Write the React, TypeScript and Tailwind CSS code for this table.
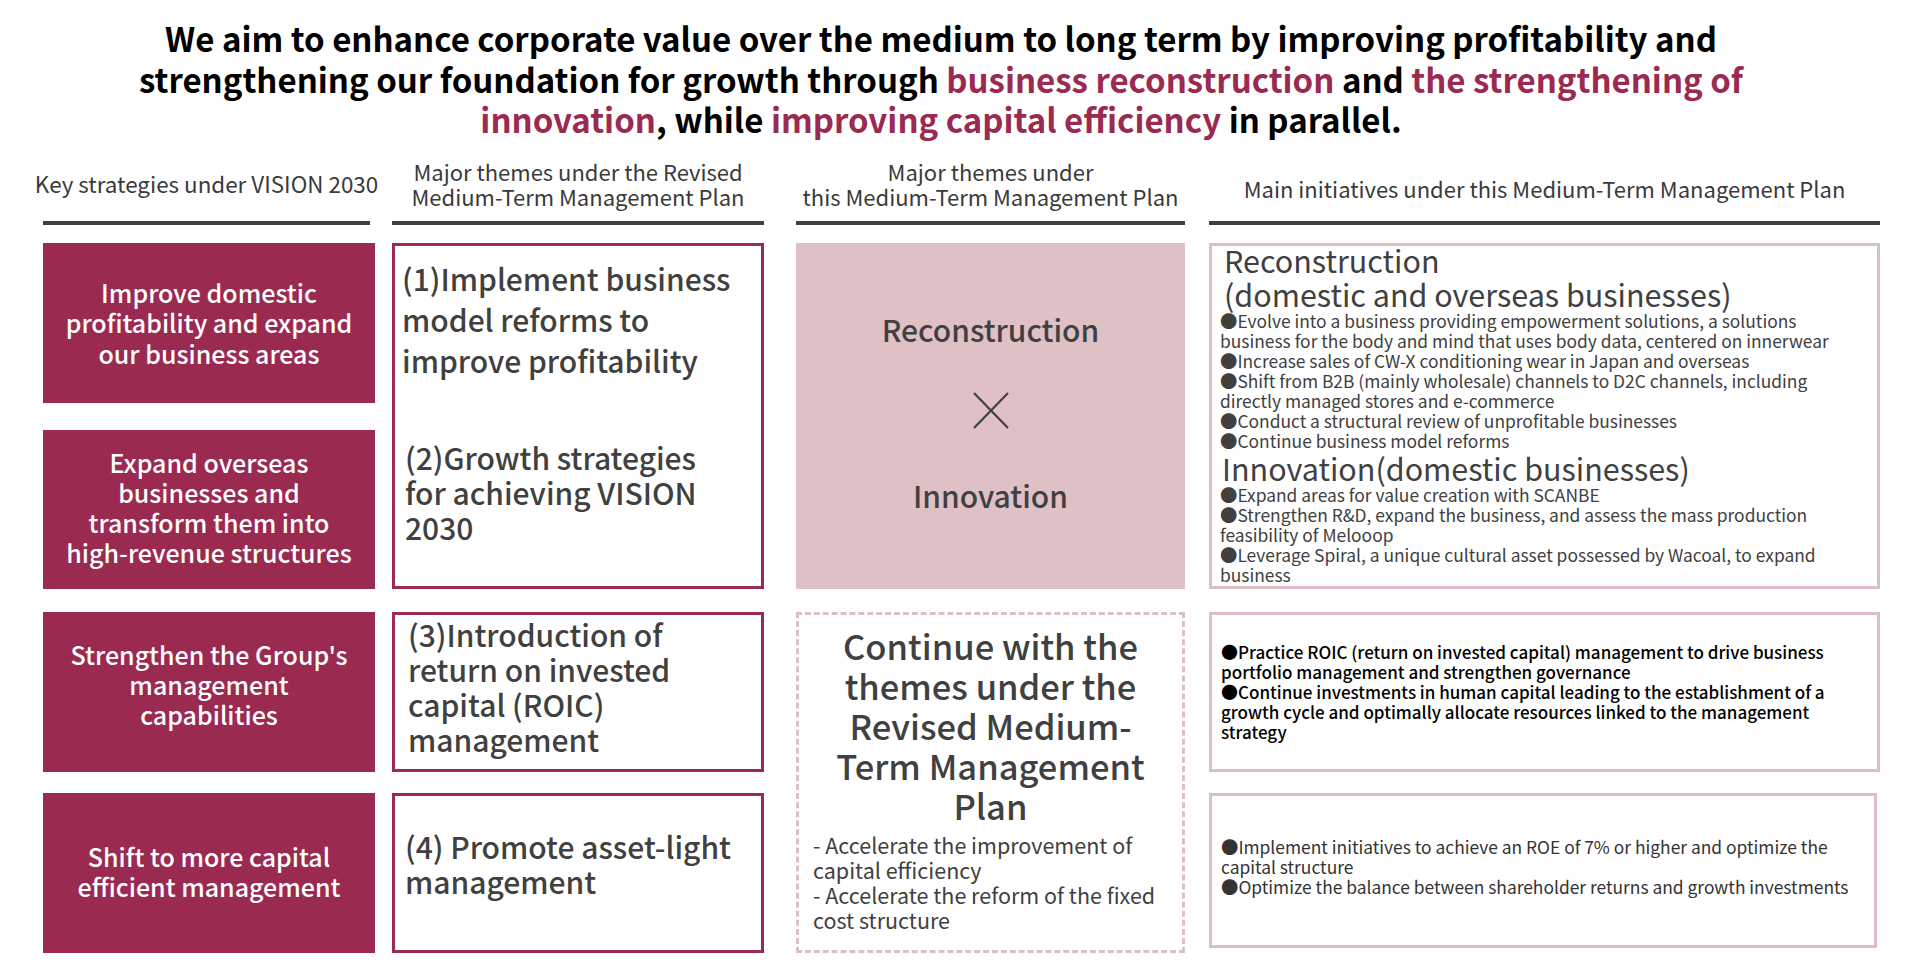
import React from "react";

const crimson = "text-[#9b2a51]";

function XMark() {
  return (
    <svg width="36" height="37" viewBox="0 0 36 37" className="block">
      <line x1="1" y1="1" x2="35" y2="36" stroke="#404040" strokeWidth="2.2" />
      <line x1="35" y1="1" x2="1" y2="36" stroke="#404040" strokeWidth="2.2" />
    </svg>
  );
}

export default function App() {
  return (
    <div className="w-[1920px] h-[980px] bg-white overflow-hidden font-['Noto_Sans_CJK_JP','Noto_Sans',sans-serif] text-[#404040]">
      <div className="pt-[18px] pr-[38px] text-center text-[33px] leading-[40.5px] font-bold text-black">
        We aim to enhance corporate value over the medium to long term by improving profitability and
        <br />
        strengthening our foundation for growth through{" "}
        <span className={crimson}>business reconstruction</span> and{" "}
        <span className={crimson}>the strengthening of</span>
        <br />
        <span className={crimson}>innovation</span>, while{" "}
        <span className={crimson}>improving capital efficiency</span> in parallel.
      </div>

      <div className="mt-[7px] ml-[43px] grid grid-cols-[332px_17px_372px_32px_389px_24px_671px] grid-rows-[78px_18px_160px_27px_159px_23px_160px_21px_160px]">
        {/* Headers */}
        <div className="col-start-1 row-start-1 mr-[5px] flex items-center justify-center border-b-4 border-[#3f3f3f] text-center text-[22.4px] leading-[25px] text-[#3a3a3a] whitespace-nowrap">
          Key strategies under VISION 2030
        </div>
        <div className="col-start-3 row-start-1 flex items-center justify-center border-b-4 border-[#3f3f3f] text-center text-[22px] leading-[25px] text-[#3a3a3a]">
          <span>
            Major themes under the Revised
            <br />
            Medium-Term Management Plan
          </span>
        </div>
        <div className="col-start-5 row-start-1 flex items-center justify-center border-b-4 border-[#3f3f3f] text-center text-[22px] leading-[25px] text-[#3a3a3a] whitespace-nowrap">
          <span>
            Major themes under
            <br />
            this Medium-Term Management Plan
          </span>
        </div>
        <div className="col-start-7 row-start-1 flex items-center justify-center pt-[10px] border-b-4 border-[#3f3f3f] text-center text-[22px] leading-[25px] text-[#3a3a3a]">
          Main initiatives under this Medium-Term Management Plan
        </div>

        {/* Column 1 */}
        <div className="col-start-1 row-start-3 flex items-center justify-center bg-[#9b2a51] text-center text-white text-[25px] leading-[30.5px] font-medium">
          <span>
            Improve domestic
            <br />
            profitability and expand
            <br />
            our business areas
          </span>
        </div>
        <div className="col-start-1 row-start-5 flex items-center justify-center pb-[4px] bg-[#9b2a51] text-center text-white text-[25px] leading-[30px] font-medium">
          <span>
            Expand overseas
            <br />
            businesses and
            <br />
            transform them into
            <br />
            high-revenue structures
          </span>
        </div>
        <div className="col-start-1 row-start-7 flex items-center justify-center pb-[16px] bg-[#9b2a51] text-center text-white text-[25px] leading-[30px] font-medium">
          <span>
            Strengthen the Group's
            <br />
            management
            <br />
            capabilities
          </span>
        </div>
        <div className="col-start-1 row-start-9 flex items-center justify-center pb-[4px] bg-[#9b2a51] text-center text-white text-[25px] leading-[30px] font-medium">
          <span>
            Shift to more capital
            <br />
            efficient management
          </span>
        </div>

        {/* Column 2 */}
        <div className="col-start-3 row-start-3 row-span-3 border-[3px] border-[#9b2a51] pt-[12px] pl-[7px] text-[30px] font-medium text-[#404040]">
          <div className="leading-[41px]">
            (1)Implement business
            <br />
            model reforms to
            <br />
            improve profitability
          </div>
          <div className="mt-[59px] pl-[3px] leading-[35px]">
            (2)Growth strategies
            <br />
            for achieving VISION
            <br />
            2030
          </div>
        </div>
        <div className="col-start-3 row-start-7 flex items-center border-[3px] border-[#9b2a51] pl-[13px] pb-[10px] text-[30px] leading-[35px] font-medium text-[#404040]">
          <span>
            (3)Introduction of
            <br />
            return on invested
            <br />
            capital (ROIC)
            <br />
            management
          </span>
        </div>
        <div className="col-start-3 row-start-9 flex items-center border-[3px] border-[#9b2a51] pl-[10px] pb-[18px] text-[30px] leading-[35px] font-medium text-[#404040]">
          <span>
            (4) Promote asset-light
            <br />
            management
          </span>
        </div>

        {/* Column 3 */}
        <div className="col-start-5 row-start-3 row-span-3 flex flex-col items-center justify-center pb-[8px] bg-[#dfc1c5] text-[30px] leading-[36px] font-medium text-[#404040]">
          <div>Reconstruction</div>
          <div className="mt-[45px] mb-[48px]">
            <XMark />
          </div>
          <div>Innovation</div>
        </div>
        <div className="col-start-5 row-start-7 row-span-3 border-[3px] border-dashed border-[#dcc0c4] pt-[10px] px-[14px] text-[#404040]">
          <div className="text-center text-[34.5px] leading-[40px] font-medium whitespace-nowrap">
            Continue with the
            <br />
            themes under the
            <br />
            Revised Medium-
            <br />
            Term Management
            <br />
            Plan
          </div>
          <div className="mt-[7px] text-[21.5px] leading-[25px] whitespace-nowrap">
            - Accelerate the improvement of
            <br />
            capital efficiency
            <br />
            - Accelerate the reform of the fixed
            <br />
            cost structure
          </div>
        </div>

        {/* Column 4 */}
        <div className="col-start-7 row-start-3 row-span-3 border-[3px] border-[#dcbfc3] pl-[8px] text-[#404040] whitespace-nowrap">
          <div className="-mt-[3px] pl-[4px] text-[30.5px] leading-[34px]">
            Reconstruction
            <br />
            (domestic and overseas businesses)
          </div>
          <div className="text-[17.4px] leading-[20px]">
            ●Evolve into a business providing empowerment solutions, a solutions
            <br />
            business for the body and mind that uses body data, centered on innerwear
            <br />
            ●Increase sales of CW-X conditioning wear in Japan and overseas
            <br />
            ●Shift from B2B (mainly wholesale) channels to D2C channels, including
            <br />
            directly managed stores and e-commerce
            <br />
            ●Conduct a structural review of unprofitable businesses
            <br />
            ●Continue business model reforms
          </div>
          <div className="pl-[2px] text-[30.5px] leading-[34px]">Innovation(domestic businesses)</div>
          <div className="text-[17.4px] leading-[20px]">
            ●Expand areas for value creation with SCANBE
            <br />
            ●Strengthen R&amp;D, expand the business, and assess the mass production
            <br />
            feasibility of Melooop
            <br />
            ●Leverage Spiral, a unique cultural asset possessed by Wacoal, to expand
            <br />
            business
          </div>
        </div>
        <div className="col-start-7 row-start-7 flex items-center border-[3px] border-[#dcbfc3] pl-[9px] text-[17px] leading-[20px] font-medium text-black whitespace-nowrap">
          <span>
            ●Practice ROIC (return on invested capital) management to drive business
            <br />
            portfolio management and strengthen governance
            <br />
            ●Continue investments in human capital leading to the establishment of a
            <br />
            growth cycle and optimally allocate resources linked to the management
            <br />
            strategy
          </span>
        </div>
        <div className="col-start-7 row-start-9 mb-[5px] mr-[3px] flex items-center border-[3px] border-[#dcbfc3] pl-[9px] pb-[6px] text-[17.4px] leading-[20px] text-[#333333] whitespace-nowrap">
          <span>
            ●Implement initiatives to achieve an ROE of 7% or higher and optimize the
            <br />
            capital structure
            <br />
            ●Optimize the balance between shareholder returns and growth investments
          </span>
        </div>
      </div>
    </div>
  );
}
